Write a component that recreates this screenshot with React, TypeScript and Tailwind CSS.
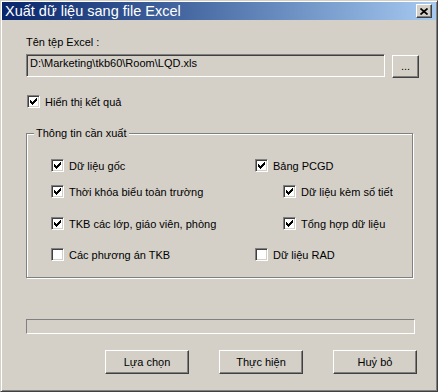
import React from "react";

function CheckMark() {
  // classic 7x7 pixel tick
  const cols = [2, 3, 4, 3, 2, 1, 0];
  return (
    <svg width="7" height="7" viewBox="0 0 7 7" shapeRendering="crispEdges">
      {cols.map((y, x) => (
        <rect key={x} x={x} y={y} width="1" height="3" fill="#000" />
      ))}
    </svg>
  );
}

function Checkbox({ checked, label }: { checked: boolean; label: string }) {
  return (
    <div className="flex items-start h-[13px]">
      <div className="w-[13px] h-[13px] shrink-0 bg-white border border-t-[#808080] border-l-[#808080] border-r-white border-b-white shadow-[inset_1px_1px_#404040,inset_-1px_-1px_#d4d0c8] pl-[2px] pt-[2px]">
        {checked && <CheckMark />}
      </div>
      <span className="ml-[5px] mt-[1px] leading-[13px] whitespace-nowrap">
        {label}
      </span>
    </div>
  );
}

function Button({ children }: { children: React.ReactNode }) {
  return (
    <div className="w-[84px] h-[24px] flex items-center justify-center border border-t-white border-l-white border-r-[#404040] border-b-[#404040] shadow-[inset_-1px_-1px_#808080] leading-[13px]">
      {children}
    </div>
  );
}

export default function App() {
  return (
    <div className="w-[438px] h-[392px] bg-[#d4d0c8] border border-t-[#d4d0c8] border-l-[#d4d0c8] border-r-[#404040] border-b-[#404040] shadow-[inset_1px_1px_#fff,inset_-1px_-1px_#808080] p-[1px] font-['Liberation_Sans',Arial,sans-serif] text-[11px] text-black overflow-hidden">
      {/* Title bar */}
      <div className="h-[18px] flex items-center justify-between bg-gradient-to-r from-[#0a246a] to-[#a6caf0] pl-[3px] pr-[4px]">
        <span className="text-white text-[14.5px] leading-[17px] pt-[1px] whitespace-nowrap">
          Xuất dữ liệu sang file Excel
        </span>
        <div className="w-[16px] h-[14px] bg-[#d4d0c8] border border-t-white border-l-white border-r-[#404040] border-b-[#404040] shadow-[inset_-1px_-1px_#808080] flex items-center justify-center">
          <svg width="8" height="7" viewBox="0 0 8 7">
            <path d="M0.5 0.5L7.5 6.5M7.5 0.5L0.5 6.5" stroke="#000" strokeWidth="1.7" />
          </svg>
        </div>
      </div>

      {/* Body */}
      <div className="flex flex-col pl-[24px]">
        <div className="mt-[16px] h-[13px] leading-[13px]">Tên tệp Excel :</div>

        <div className="mt-[5px] flex items-start gap-[7px]">
          <div className="w-[359px] h-[23px] border border-t-[#808080] border-l-[#808080] border-r-white border-b-white shadow-[inset_1px_1px_#404040,inset_-1px_-1px_#d4d0c8] pl-[3px] pt-[2px] leading-[13px] whitespace-nowrap">
            D:\Marketing\tkb60\Room\LQD.xls
          </div>
          <div className="mt-[1px] w-[27px] h-[23px] flex items-center justify-center border border-t-white border-l-white border-r-[#404040] border-b-[#404040] shadow-[inset_-1px_-1px_#808080] leading-[13px]">
            ...
          </div>
        </div>

        <div className="mt-[17px] ml-[1px]">
          <Checkbox checked label="Hiển thị kết quả" />
        </div>

        {/* Group box */}
        <div className="relative mt-[25px] w-[387px] h-[145px] border border-[#808080] shadow-[inset_1px_1px_#fff,1px_1px_#fff] pt-[25px] pl-[24px]">
          <span className="absolute left-[7px] top-[-7px] bg-[#d4d0c8] px-[2px] leading-[13px] whitespace-nowrap">
            Thông tin cần xuất
          </span>
          <div className="flex h-[13px]">
            <div className="w-[204px]">
              <Checkbox checked label="Dữ liệu gốc" />
            </div>
            <Checkbox checked label="Bảng PCGD" />
          </div>
          <div className="flex h-[13px] mt-[13px]">
            <div className="w-[204px]">
              <Checkbox checked label="Thời khóa biểu toàn trường" />
            </div>
            <div className="pl-[28px]">
              <Checkbox checked label="Dữ liệu kèm số tiết" />
            </div>
          </div>
          <div className="flex h-[13px] mt-[19px]">
            <div className="w-[204px]">
              <Checkbox checked label="TKB các lớp, giáo viên, phòng" />
            </div>
            <div className="pl-[28px]">
              <Checkbox checked label="Tổng hợp dữ liệu" />
            </div>
          </div>
          <div className="flex h-[13px] mt-[18px]">
            <div className="w-[204px]">
              <Checkbox checked={false} label="Các phương án TKB" />
            </div>
            <Checkbox checked={false} label="Dữ liệu RAD" />
          </div>
        </div>

        {/* Progress bar */}
        <div className="mt-[41px] w-[389px] h-[15px] border border-t-[#808080] border-l-[#808080] border-r-white border-b-white" />

        {/* Buttons */}
        <div className="mt-[16px] pl-[79px] flex gap-[30px]">
          <Button>Lựa chọn</Button>
          <Button>Thực hiện</Button>
          <Button>Huỷ bỏ</Button>
        </div>
      </div>
    </div>
  );
}
